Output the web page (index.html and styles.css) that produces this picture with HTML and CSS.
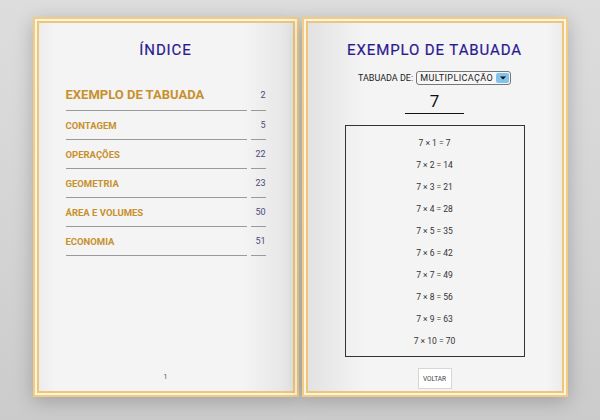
FILE: index.html
```html
<!DOCTYPE html>
<html lang="pt">
<head>
<meta charset="utf-8">
<title>Tabuada</title>
<link rel="stylesheet" href="styles.css">
</head>
<body>
<div class="book">
  <section class="page page-left">
    <div class="page-inner">
      <h1 class="title">ÍNDICE</h1>
      <ul class="toc">
        <li class="toc-row toc-main"><span class="toc-label">EXEMPLO DE TABUADA</span><span class="toc-num">2</span></li>
        <li class="toc-row"><span class="toc-label">CONTAGEM</span><span class="toc-num">5</span></li>
        <li class="toc-row"><span class="toc-label">OPERAÇÕES</span><span class="toc-num">22</span></li>
        <li class="toc-row"><span class="toc-label">GEOMETRIA</span><span class="toc-num">23</span></li>
        <li class="toc-row"><span class="toc-label">ÁREA E VOLUMES</span><span class="toc-num">50</span></li>
        <li class="toc-row"><span class="toc-label">ECONOMIA</span><span class="toc-num">51</span></li>
      </ul>
      <div class="page-number">1</div>
    </div>
  </section>
  <section class="page page-right">
    <div class="page-inner">
      <h1 class="title">EXEMPLO DE TABUADA</h1>
      <div class="chooser">
        <span class="chooser-label">TABUADA DE:</span>
        <span class="select"><span class="select-text">MULTIPLICAÇÃO</span><span class="select-btn"><svg width="6" height="4" viewBox="0 0 6 4"><path d="M0 0.5h6L3 3.5z" fill="#111"/></svg></span></span>
      </div>
      <div class="number">7</div>
      <div class="table">
        <div class="t-row">7 × 1 = 7</div>
        <div class="t-row">7 × 2 = 14</div>
        <div class="t-row">7 × 3 = 21</div>
        <div class="t-row">7 × 4 = 28</div>
        <div class="t-row">7 × 5 = 35</div>
        <div class="t-row">7 × 6 = 42</div>
        <div class="t-row">7 × 7 = 49</div>
        <div class="t-row">7 × 8 = 56</div>
        <div class="t-row">7 × 9 = 63</div>
        <div class="t-row">7 × 10 = 70</div>
      </div>
      <button class="back">VOLTAR</button>
    </div>
  </section>
</div>
</body>
</html>
```

FILE: styles.css
```css
* { box-sizing: border-box; }
html, body { margin: 0; padding: 0; }
body {
  width: 600px;
  height: 420px;
  overflow: hidden;
  background: linear-gradient(#dddddd, #d3d3d3 60%, #cbcbcb);
  font-family: "Roboto", "DejaVu Sans", sans-serif;
}
.book {
  display: flex;
  justify-content: center;
  gap: 3px;
  padding-top: 17px;
}
.page {
  width: 266px;
  height: 380px;
  border: 2px solid #f2cc80;
  background: #fcf4e2;
  padding: 2px;
  box-shadow: 0 4px 18px rgba(0,0,0,0.22);
}
.page-inner {
  height: 100%;
  border: 2px solid #f0c676;
  display: flex;
  flex-direction: column;
  align-items: center;
}
.page-left .page-inner {
  background: linear-gradient(to right, #ececec 0, #f4f4f4 6%, #f4f4f4 80%, #e4e4e4 100%);
}
.page-right .page-inner {
  background: linear-gradient(to left, #ececec 0, #f4f4f4 6%, #f4f4f4 78%, #e2e2e2 100%);
}
.title {
  margin: 17px 0 0;
  height: 20px;
  line-height: 20px;
  font-size: 15px;
  font-weight: 400;
  letter-spacing: 0.9px;
  color: #2b1a90;
  -webkit-text-stroke: 0.2px #2b1a90;
}
.toc {
  list-style: none;
  margin: 0;
  padding: 0;
  width: 200px;
  margin-top: 19px;
}
.toc-row {
  display: flex;
  gap: 4px;
  height: 29px;
  font-size: 9.5px;
  font-weight: 700;
}
.toc-main { height: 32px; font-size: 13px; }
.toc-label {
  flex: 1;
  display: flex;
  align-items: center;
  color: #c8902c;
  border-bottom: 1px solid #9a9a9a;
}
.toc-num {
  width: 15px;
  display: flex;
  align-items: center;
  justify-content: flex-end;
  color: #4c4a78;
  font-weight: 400;
  font-size: 9px;
  border-bottom: 1px solid #9a9a9a;
}
.page-number {
  margin-top: auto;
  margin-bottom: 10px;
  font-size: 7px;
  color: #555;
}
.chooser {
  margin-top: 11px;
  display: flex;
  align-items: center;
  gap: 3px;
  height: 14px;
  font-size: 9px;
  color: #222;
}
.select {
  display: flex;
  align-items: center;
  height: 14px;
  border: 1px solid #777;
  border-radius: 3px;
  padding-left: 3px;
  padding-right: 1px;
  background: #f6f6f6;
}
.select-text { padding-right: 3px; letter-spacing: 0.4px; }
.select-btn {
  width: 13px;
  height: 10px;
  background: #83c3ea;
  border-radius: 2px;
  display: flex;
  align-items: center;
  justify-content: center;
}
.number {
  margin-top: 4px;
  width: 59px;
  height: 25px;
  text-align: center;
  font-size: 17px;
  line-height: 24px;
  color: #111;
  border-bottom: 1px solid #111;
}
.table {
  margin-top: 11px;
  width: 180px;
  border: 1px solid #333;
  padding: 6px 0 4px;
}
.t-row {
  height: 22px;
  line-height: 22px;
  text-align: center;
  font-size: 8.5px;
  color: #333;
}
.back {
  margin-top: 11px;
  width: 34px;
  height: 21px;
  padding: 0;
  background: #fff;
  border: 1px solid #d6d6d6;
  font-family: inherit;
  font-size: 6.5px;
  color: #444;
}
```
